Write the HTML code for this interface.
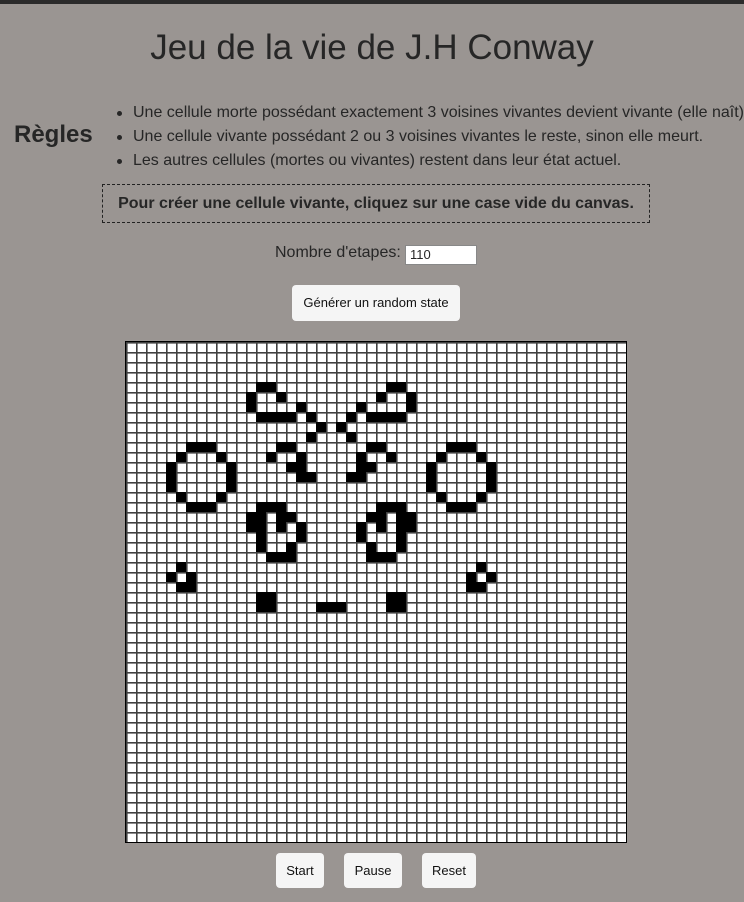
<!DOCTYPE html>
<html><head><meta charset="utf-8"><style>
body{margin:0;width:744px;height:902px;background:#9a9592;font-family:"Liberation Sans",sans-serif;color:#262626;position:relative;overflow:hidden}
.top{position:absolute;left:0;top:0;width:744px;height:4px;background:#2b2b2b}
h1{position:absolute;left:0;width:744px;top:28px;margin:0;text-align:center;font-weight:normal;font-size:35px}
.reg{position:absolute;left:14px;top:121px;font-weight:bold;font-size:24px}
ul{position:absolute;left:133px;top:101px;margin:0;padding:0;font-size:16px;line-height:24px;white-space:nowrap}
li{position:relative;list-style:none}
li:before{content:"";position:absolute;left:-16px;top:10px;width:5px;height:5px;border-radius:50%;background:#262626}
.box{position:absolute;left:102px;top:184px;width:546px;height:37px;border:1px dashed #222;text-align:center;font-weight:bold;font-size:16px;line-height:37px}
.lab{position:absolute;left:275px;top:244px;font-size:16px}
.inp{position:absolute;left:405px;top:245px;background:#fff;border:1px solid #888;font-size:13px;line-height:18px;padding-left:4px;box-sizing:border-box;width:72px;height:20px}
.btn{position:absolute;background:#f5f5f5;border-radius:4px;font-size:13px;text-align:center;color:#111}
.grid{position:absolute;left:125px;top:341px;width:500px;height:500px;border:1px solid #000;background:#fff}
</style></head><body>
<div class="top"></div>
<h1>Jeu de la vie de J.H Conway</h1>
<div class="reg">Règles</div>
<ul>
<li>Une cellule morte possédant exactement 3 voisines vivantes devient vivante (elle naît)</li>
<li>Une cellule vivante possédant 2 ou 3 voisines vivantes le reste, sinon elle meurt.</li>
<li>Les autres cellules (mortes ou vivantes) restent dans leur état actuel.</li>
</ul>
<div class="box">Pour créer une cellule vivante, cliquez sur une case vide du canvas.</div>
<div class="lab">Nombre d'etapes:</div>
<div class="inp">110</div>
<div class="btn" style="left:292px;top:285px;width:168px;height:36px;line-height:36px">Générer un random state</div>
<div class="grid"><svg width="500" height="500" style="display:block">
<defs><pattern id="p" width="10" height="10" patternUnits="userSpaceOnUse"><rect width="10" height="10" fill="#fff"/><rect width="1.6" height="10" fill="#404040"/><rect width="10" height="1.6" fill="#404040"/></pattern></defs>
<rect width="500" height="500" fill="url(#p)"/>
<g fill="#000">
<rect x="130" y="40" width="20" height="10"/><rect x="120" y="50" width="10" height="20"/><rect x="150" y="50" width="10" height="10"/><rect x="170" y="60" width="10" height="10"/>
<rect x="130" y="70" width="40" height="10"/><rect x="180" y="70" width="10" height="10"/><rect x="190" y="80" width="10" height="10"/><rect x="180" y="90" width="10" height="10"/>
<rect x="60" y="100" width="30" height="10"/><rect x="150" y="100" width="20" height="10"/>
<rect x="50" y="110" width="10" height="10"/><rect x="90" y="110" width="10" height="10"/><rect x="140" y="110" width="10" height="10"/><rect x="170" y="110" width="10" height="10"/>
<rect x="40" y="120" width="10" height="30"/><rect x="100" y="120" width="10" height="30"/><rect x="160" y="120" width="20" height="10"/><rect x="170" y="130" width="20" height="10"/>
<rect x="50" y="150" width="10" height="10"/><rect x="90" y="150" width="10" height="10"/>
<rect x="60" y="160" width="30" height="10"/><rect x="130" y="160" width="30" height="10"/>
<rect x="120" y="170" width="20" height="20"/><rect x="150" y="170" width="20" height="10"/><rect x="150" y="180" width="10" height="10"/><rect x="170" y="180" width="10" height="20"/>
<rect x="130" y="190" width="10" height="20"/><rect x="160" y="200" width="10" height="10"/><rect x="140" y="210" width="30" height="10"/>
<rect x="50" y="220" width="10" height="10"/><rect x="40" y="230" width="10" height="10"/><rect x="60" y="230" width="10" height="10"/><rect x="50" y="240" width="20" height="10"/>
<rect x="130" y="250" width="20" height="20"/><rect x="190" y="260" width="30" height="10"/>
<rect x="260" y="40" width="20" height="10"/><rect x="280" y="50" width="10" height="20"/><rect x="250" y="50" width="10" height="10"/><rect x="230" y="60" width="10" height="10"/>
<rect x="240" y="70" width="40" height="10"/><rect x="220" y="70" width="10" height="10"/><rect x="210" y="80" width="10" height="10"/><rect x="220" y="90" width="10" height="10"/>
<rect x="320" y="100" width="30" height="10"/><rect x="240" y="100" width="20" height="10"/>
<rect x="350" y="110" width="10" height="10"/><rect x="310" y="110" width="10" height="10"/><rect x="260" y="110" width="10" height="10"/><rect x="230" y="110" width="10" height="10"/>
<rect x="360" y="120" width="10" height="30"/><rect x="300" y="120" width="10" height="30"/><rect x="230" y="120" width="20" height="10"/><rect x="220" y="130" width="20" height="10"/>
<rect x="350" y="150" width="10" height="10"/><rect x="310" y="150" width="10" height="10"/>
<rect x="320" y="160" width="30" height="10"/><rect x="250" y="160" width="30" height="10"/>
<rect x="270" y="170" width="20" height="20"/><rect x="240" y="170" width="20" height="10"/><rect x="250" y="180" width="10" height="10"/><rect x="230" y="180" width="10" height="20"/>
<rect x="270" y="190" width="10" height="20"/><rect x="240" y="200" width="10" height="10"/><rect x="240" y="210" width="30" height="10"/>
<rect x="350" y="220" width="10" height="10"/><rect x="340" y="230" width="10" height="10"/><rect x="360" y="230" width="10" height="10"/><rect x="340" y="240" width="20" height="10"/>
<rect x="260" y="250" width="20" height="20"/>
</g></svg></div>
<div class="btn" style="left:276px;top:853px;width:48px;height:35px;line-height:35px">Start</div>
<div class="btn" style="left:344px;top:853px;width:58px;height:35px;line-height:35px">Pause</div>
<div class="btn" style="left:422px;top:853px;width:54px;height:35px;line-height:35px">Reset</div>
</body></html>
